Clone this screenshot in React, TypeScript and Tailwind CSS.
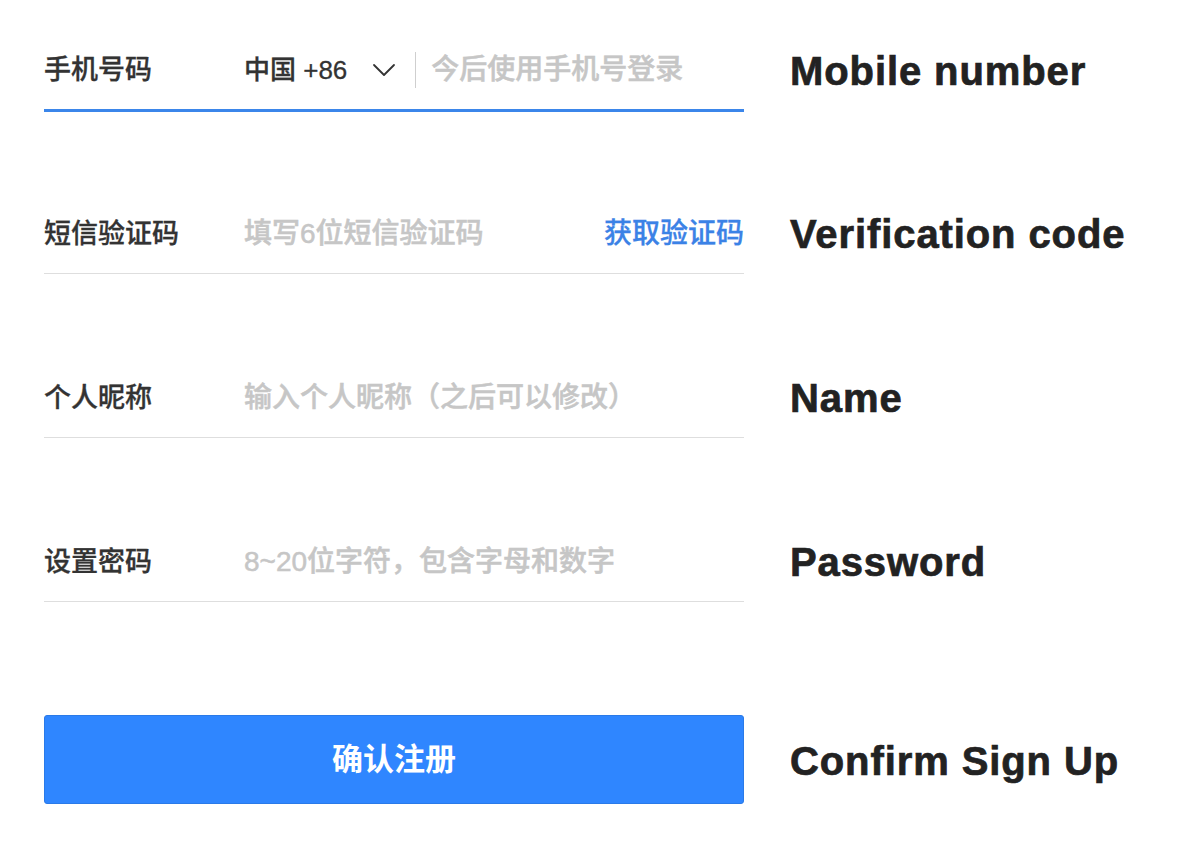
import React from "react";

const cjk = { fontFamily: '"Liberation Sans", "Noto Sans CJK SC", sans-serif' };
const latin = { fontFamily: '"Liberation Sans", Arial, sans-serif' };

function RightLabel({ children }: { children: React.ReactNode }) {
  return (
    <div
      className="pt-[2px] text-[40px] font-bold tracking-[0.9px] text-[#222] leading-none whitespace-nowrap [-webkit-text-stroke:0.7px_#222]"
      style={latin}
    >
      {children}
    </div>
  );
}

function Field({
  label,
  children,
  active = false,
}: {
  label: string;
  children: React.ReactNode;
  active?: boolean;
}) {
  return (
    <div
      className={
        "flex items-center w-[700px] pt-[3px] " +
        (active ? "h-[84px] border-b-[3px] border-[#3b86ea]" : "h-[82px] border-b border-[#dedede]")
      }
    >
      <div className="w-[200px] text-[27px] font-medium text-[#333] leading-none [-webkit-text-stroke:0.3px_#333]">
        {label}
      </div>
      <div className="flex-1 flex items-center">{children}</div>
    </div>
  );
}

const ph =
  "text-[28px] font-medium text-[#c6c6c6] leading-none [-webkit-text-stroke:0.5px_#c6c6c6]";

export default function App() {
  return (
    <div className="w-[1188px] h-[843px] bg-white pl-[44px] pt-[28px]" style={cjk}>
      {/* Row 1 */}
      <div className="flex items-center gap-[46px]">
        <Field label="手机号码" active>
          <div className="flex items-center">
            <span className="text-[26px] font-medium text-[#333] leading-none [-webkit-text-stroke:0.3px_#333]">
              中国 +86
            </span>
            <svg
              className="ml-[25px]"
              width="24"
              height="14"
              viewBox="0 0 24 14"
              fill="none"
              stroke="#333"
              strokeWidth="1.8"
              strokeLinecap="round"
              strokeLinejoin="round"
            >
              <path d="M2 2 L12 12 L22 2" />
            </svg>
            <div className="ml-[19px] w-px h-[36px] bg-[#cfcfcf]" />
            <span className={"ml-[15px] " + ph}>今后使用手机号登录</span>
          </div>
        </Field>
        <RightLabel>Mobile number</RightLabel>
      </div>

      {/* Row 2 */}
      <div className="flex items-center gap-[46px] mt-[80px]">
        <Field label="短信验证码">
          <div className="flex items-center justify-between w-full">
            <span className={ph}>填写6位短信验证码</span>
            <span className="text-[28px] font-medium text-[#3b82e6] leading-none [-webkit-text-stroke:0.3px_#3b82e6]">
              获取验证码
            </span>
          </div>
        </Field>
        <RightLabel>Verification code</RightLabel>
      </div>

      {/* Row 3 */}
      <div className="flex items-center gap-[46px] mt-[82px]">
        <Field label="个人昵称">
          <span className={ph}>输入个人昵称（之后可以修改）</span>
        </Field>
        <RightLabel>Name</RightLabel>
      </div>

      {/* Row 4 */}
      <div className="flex items-center gap-[46px] mt-[82px]">
        <Field label="设置密码">
          <span className={ph}>8~20位字符，包含字母和数字</span>
        </Field>
        <RightLabel>Password</RightLabel>
      </div>

      {/* Button */}
      <div className="flex items-center gap-[46px] mt-[113px]">
        <button className="w-[700px] h-[89px] rounded-[3px] bg-[#2f86ff] border border-[#2a7ae8] flex items-center justify-center text-white text-[31px] font-semibold leading-none">
          确认注册
        </button>
        <RightLabel>Confirm Sign Up</RightLabel>
      </div>
    </div>
  );
}
